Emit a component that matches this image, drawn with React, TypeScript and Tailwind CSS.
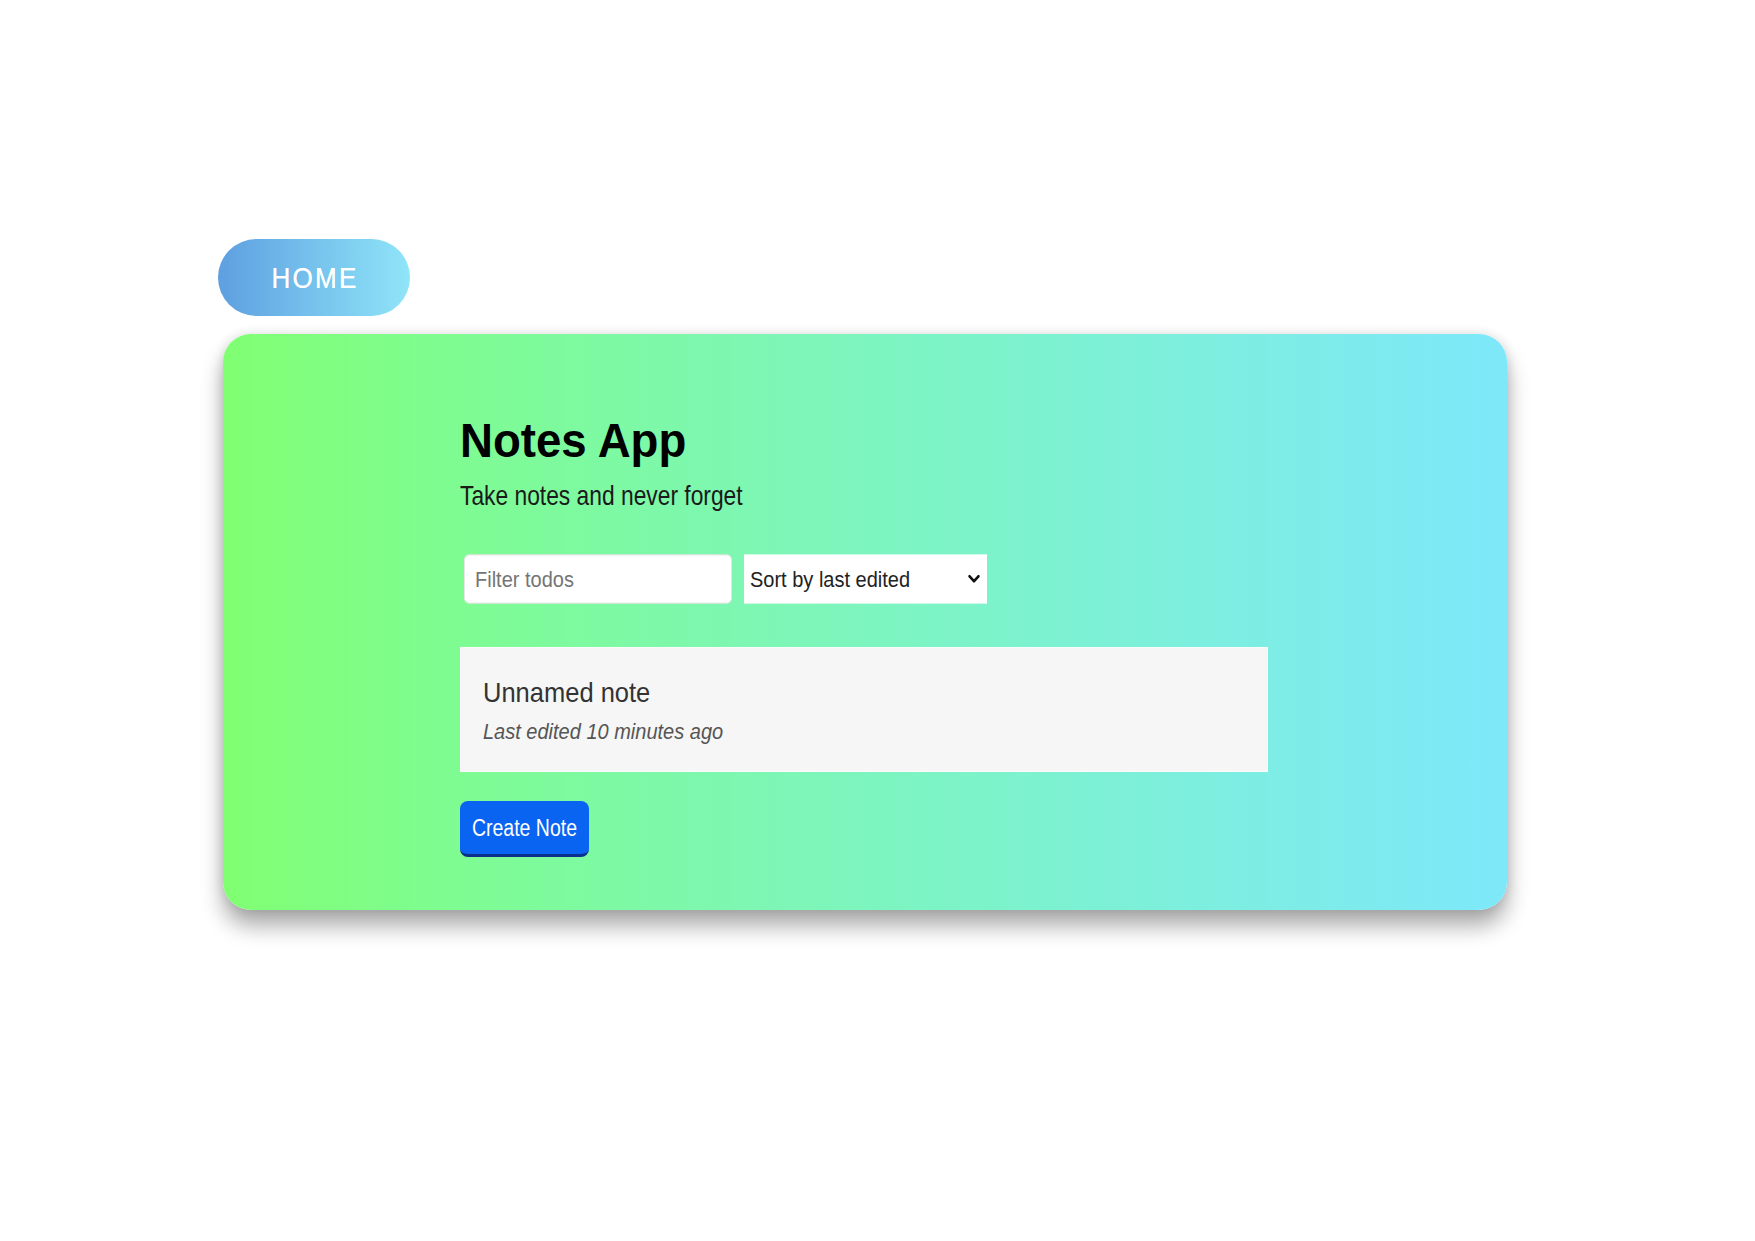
export default function App() {
  return (
    <div className="min-h-screen w-full bg-white pt-[239px] pl-[218px] font-['Liberation_Sans',Arial,sans-serif]">
      <div className="flex h-[77px] w-[192px] items-center justify-center rounded-full bg-linear-to-r from-[#5e9fe0] to-[#90e5f8]">
        <span className="inline-block scale-y-[1.15] pl-[2px] text-[26px] leading-none tracking-[2.3px] text-white [text-shadow:0_0_0.4px_#fff]">
          HOME
        </span>
      </div>

      <div className="mt-[18px] ml-[5px] h-[576px] w-[1284px] rounded-[28px] bg-linear-to-r from-[#80ff72] to-[#7ee8fa] pl-[237px] pt-[82px] shadow-[0_16px_22px_rgba(0,0,0,0.33),0_0_12px_rgba(0,0,0,0.12)]">
        <h1 className="h-[50px] scale-y-[1.07] text-[45.6px] leading-[50px] font-bold text-black">Notes App</h1>
        <p className="mt-[15.6px] h-[26px] scale-y-[1.25] text-[22.8px] leading-[26px] text-[#1a1a1a]">
          Take notes and never forget
        </p>

        <div className="mt-[49px] flex h-[44px] scale-y-[1.12] items-center">
          <input
            placeholder="Filter todos"
            className="ml-[4px] h-[44px] w-[268px] rounded-[5px] border border-[#e6e6e6] bg-white px-[10px] text-[20px] text-[#222] outline-none placeholder:text-[#757575]"
          />
          <div className="relative ml-[12px] h-[44px] w-[243px]">
            <select
              defaultValue="edited"
              className="h-full w-full appearance-none bg-white pl-[6px] text-[20px] text-[#222] outline-none"
            >
              <option value="edited">Sort by last edited</option>
              <option value="created">Sort by recently created</option>
              <option value="alpha">Sort alphabetically</option>
            </select>
            <svg
              className="pointer-events-none absolute right-[7px] top-1/2 -translate-y-1/2"
              width="12"
              height="8"
              viewBox="0 0 12 8"
              fill="none"
            >
              <path d="M1.5 1.5 L6 6 L10.5 1.5" stroke="#111" strokeWidth="2.4" strokeLinecap="round" strokeLinejoin="round" />
            </svg>
          </div>
        </div>

        <div className="mt-[46.5px] h-[125px] w-[808px] border border-[#fbfbfb] bg-[#f6f6f6] pl-[22px] pt-[29px]">
          <div className="h-[30px] scale-y-[1.1] text-[25.5px] leading-[30px] text-[#333]">Unnamed note</div>
          <div className="mt-[12px] h-[24px] scale-y-[1.12] text-[20px] italic leading-[24px] text-[#555]">
            Last edited 10 minutes ago
          </div>
        </div>

        <button className="mt-[29px] flex h-[56px] w-[129px] items-center justify-center rounded-[8px] border-b-[3px] border-b-[#0b2f8c] bg-[#0a64f2] text-[19.5px] text-white">
          <span className="inline-block scale-y-[1.25]">Create Note</span>
        </button>
      </div>
    </div>
  );
}
